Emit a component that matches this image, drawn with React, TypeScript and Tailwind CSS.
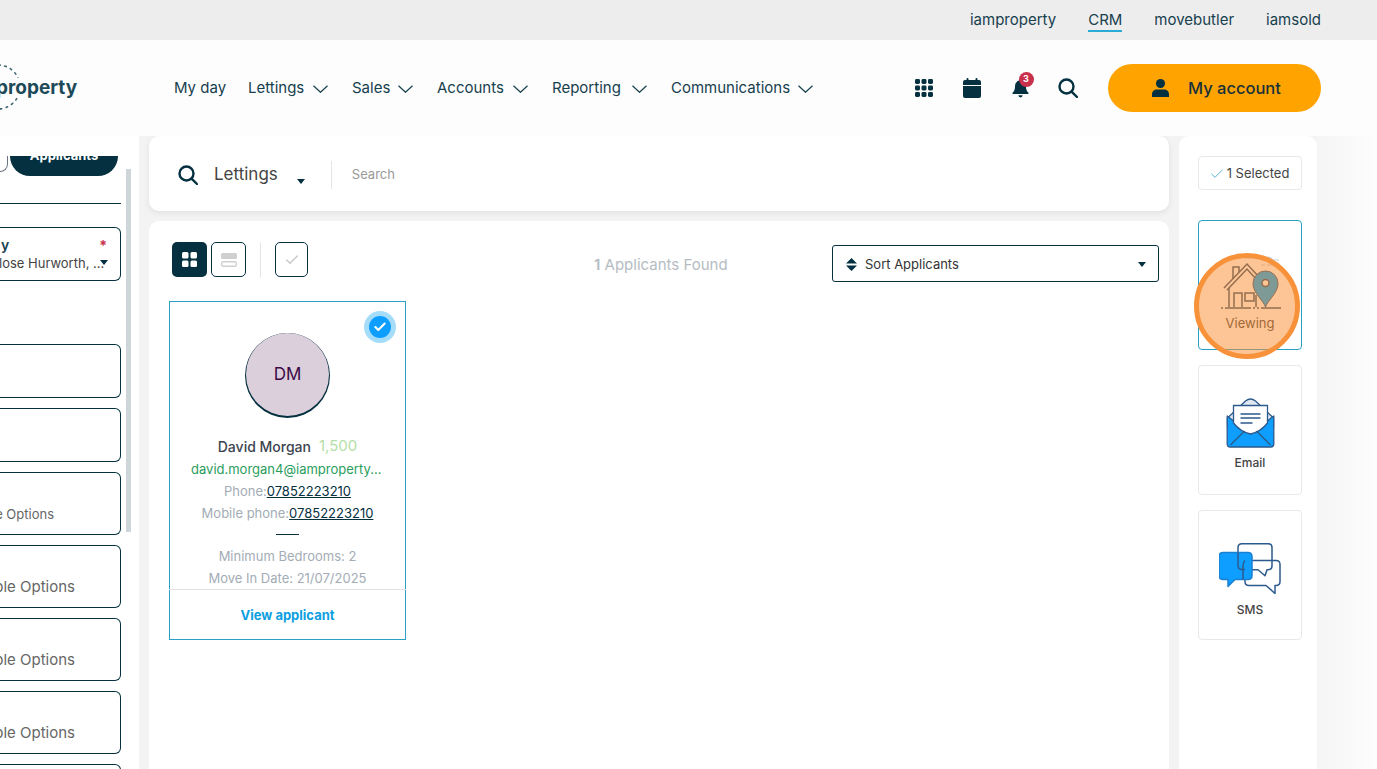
import { Check } from "lucide-react";

const font = { fontFamily: "Inter, 'Noto Sans', sans-serif" };

const navItems = [
  { label: "My day", hasMenu: false, width: "w-[50px]" },
  { label: "Lettings", hasMenu: true, width: "w-[56px]" },
  { label: "Sales", hasMenu: true, width: "w-[37px]" },
  { label: "Accounts", hasMenu: true, width: "w-[67px]" },
  { label: "Reporting", hasMenu: true, width: "w-[71px]" },
  { label: "Communications", hasMenu: true, width: "w-[118px]" },
];

const filterBoxes = [
  { height: "h-[54px]", text: "", textClass: "" },
  { height: "h-[54px]", text: "", textClass: "" },
  { height: "h-[63px]", text: "e Options", textClass: "text-[13px] pt-[32px] pr-[66px]" },
  { height: "h-[63px]", text: "ple Options", textClass: "text-[15px] pt-[30px] pr-[45px]" },
  { height: "h-[63px]", text: "ple Options", textClass: "text-[15px] pt-[30px] pr-[45px]" },
  { height: "h-[63px]", text: "ple Options", textClass: "text-[15px] pt-[30px] pr-[45px]" },
];

function Caret({ className }: { className: string }) {
  return (
    <svg className={className} viewBox="0 0 8 5" fill="currentColor">
      <path d="M0 0h8L4 5z" />
    </svg>
  );
}

function NavChevron() {
  return (
    <svg className="w-[15px] h-2 mt-[2px]" viewBox="0 0 15 8" fill="none" stroke="#17404e" strokeWidth="1.200">
      <path d="M.5.7 7.500 7.300 14.500.7" />
    </svg>
  );
}

function SearchGlyph({ className }: { className: string }) {
  return (
    <svg className={className} viewBox="0 0 20 20" fill="none" stroke="#04303f" strokeWidth="2.400" strokeLinecap="round">
      <circle cx="8.500" cy="8.500" r="7" />
      <path d="M13.800 13.800 19 19" />
    </svg>
  );
}

function GridIcon() {
  return (
    <svg className="w-[18px] h-[18px]" viewBox="0 0 18 18" fill="#04303f">
      {[0, 6.5, 13].map((y) =>
        [0, 6.5, 13].map((x) => <rect key={`${x}-${y}`} x={x} y={y} width="5" height="5" rx="1.4" />),
      )}
    </svg>
  );
}

function CalendarIcon() {
  return (
    <svg className="w-[18px] h-5" viewBox="0 0 18 20" fill="#04303f">
      <rect x="3.500" y="0" width="2" height="4" rx="1" />
      <rect x="12.500" y="0" width="2" height="4" rx="1" />
      <path d="M2 2h14a2 2 0 0 1 2 2v3H0V4a2 2 0 0 1 2-2z" />
      <path d="M0 8h18v10a2 2 0 0 1-2 2H2a2 2 0 0 1-2-2z" />
    </svg>
  );
}

function BellIcon() {
  return (
    <svg className="w-[17px] h-[19px]" viewBox="0 0 20 22" fill="#04303f">
      <path d="M10 0a1.500 1.500 0 0 1 1.500 1.600C14.600 2.300 16.400 5 16.400 8c0 4.600 1.200 6.200 3 8v1.500H.6V16c1.800-1.800 3-3.400 3-8 0-3 1.800-5.700 4.900-6.400A1.500 1.500 0 0 1 10 0z" />
      <path d="M7.500 19h5a2.500 2.500 0 0 1-5 0z" />
    </svg>
  );
}

function PersonIcon() {
  return (
    <svg className="w-[17px] h-[18px]" viewBox="0 0 18 19" fill="#04303f">
      <circle cx="9" cy="4.800" r="4.800" />
      <path d="M0 19v-3c0-3 2.500-5 5-5h8c2.500 0 5 2 5 5v3z" />
    </svg>
  );
}

function ViewingIcon() {
  return (
    <svg className="w-[60px] h-[56px]" viewBox="0 0 60 56" fill="none" stroke="#2d4f6f" strokeWidth="1.500">
      <path d="M46 2c3 0 5 1 6 3h6M40 10h4M46 10h6M24 3h6M32 3h4" strokeOpacity="0.3" strokeWidth="1" />
      <path d="M3 33 26 9l12 13" />
      <path d="M6 35 26 14l9 10" />
      <path d="M12 24V12h6v5" />
      <path d="M8 33v19M35 40v12" />
      <path d="M13 52V38h8v14M24 38h9v8h-9z" />
      <path d="M0 53h60" strokeDasharray="2 2 26 2 2 2 2 2 30" />
      <path d="M44.500 52C42 45 32 38 32 28.500a12.500 12.500 0 0 1 25 0c0 9.500-10 16.500-12.500 23.500z" fill="#00a8ff" stroke="#2d4f6f" strokeWidth="1" />
      <circle cx="44.500" cy="28" r="3.500" fill="#fff" stroke="#2d4f6f" />
    </svg>
  );
}

function EmailIcon() {
  return (
    <svg className="w-[49px] h-[50px]" viewBox="0 0 48 50" stroke="#2c5a8c" strokeWidth="1.300" strokeLinejoin="round">
      <path d="M1 20 19 3q5-4 10 0l18 17v10H1z" fill="#dfe8f2" />
      <path d="M0.700 18 24 36l23.300-18v28q0 3-3 3H3.700q-3 0-3-3z" fill="#0d9eff" />
      <path d="M7 7.500h34V25q-7 9-17 11Q14 34 7 25z" fill="#fff" />
      <path d="M14 16h20M14 20h20M14 25h12" fill="none" strokeWidth="1.600" />
      <path d="M4 47l14-14M44 47 30 33" fill="none" />
    </svg>
  );
}

function SmsIcon() {
  return (
    <svg className="w-[62px] h-[52px]" viewBox="0 0 62 52" fill="none" stroke="#2c5a8c" strokeWidth="1.500" strokeLinejoin="round">
      <path d="M23 .7h26q4 0 4 4v18q0 4-4 4h-1l-2 6-7-6H23q-4 0-4-4v-18q0-4 4-4z" />
      <path d="M30 17.500h27q4 0 4 4v17q0 4-4 4h-1v8l-9-8H30q-4 0-4-4v-17q0-4 4-4z" />
      <path d="M4 9.500h25q4 0 4 4v19q0 4-4 4H16l-7 7v-7H4q-4 0-4-4v-19q0-4 4-4z" fill="#0d9eff" stroke="#1c7fd0" />
      <path d="M19 9.500v13q0 3 3 4h4M26 17.500q-2 2-2 5v14" />
    </svg>
  );
}

export default function App() {
  return (
    <div className="h-[769px] w-[1377px] overflow-hidden bg-[#f3f3f3] text-[#04303f]" style={font}>
      <div className="h-10 bg-[#ededed] flex justify-end items-center gap-8 pr-14 text-[15px] text-[#17404e]">
        <span>iamproperty</span>
        <span className="h-full flex items-center relative">
          CRM
          <span className="absolute left-0 right-0 bottom-2 h-0.5 bg-[#29abd4]" />
        </span>
        <span>movebutler</span>
        <span>iamsold</span>
      </div>

      <header className="h-24 bg-[#fdfdfd] flex items-center relative">
        <div className="w-[174px] shrink-0 h-full flex items-center overflow-hidden relative">
          <svg className="absolute -left-[26px] top-[23px] w-[48px] h-[48px]" viewBox="0 0 48 48" fill="none" stroke="#3f6470" strokeWidth="1.600" strokeDasharray="1.600 4.500" strokeLinecap="round">
            <circle cx="24" cy="24" r="22" />
          </svg>
          <span className="relative -ml-1 -mt-[1px] text-[19px] font-bold text-[#1d4a58] bg-[#fdfdfd] leading-[20px]">property</span>
        </div>
        <nav className="flex items-center gap-6 text-[15px] text-[#17404e]">
          {navItems.map((item) => (
            <span key={item.label} className="flex items-center gap-[9px]">
              <span className={`${item.width} whitespace-nowrap`}>{item.label}</span>
              {item.hasMenu && <NavChevron />}
            </span>
          ))}
        </nav>
        <div className="ml-auto mr-14 flex items-center">
          <div className="flex items-center gap-6 mr-[28px]">
            <span className="w-6 flex justify-center"><GridIcon /></span>
            <span className="w-6 flex justify-center"><CalendarIcon /></span>
            <div className="w-6 flex justify-center">
              <div className="relative flex">
                <BellIcon />
                <span className="absolute -top-[7px] left-[7px] w-[15px] h-[15px] rounded-full bg-[#c8304b] text-white text-[9px] font-bold flex items-center justify-center">3</span>
              </div>
            </div>
            <span className="w-6 flex justify-center"><SearchGlyph className="w-5 h-5" /></span>
          </div>
          <button className="w-[213px] h-12 rounded-full bg-[#ffa300] flex items-center pl-[44px] gap-[19px] text-[16.500px] font-medium text-[#17313a]">
            <PersonIcon />
            My account
          </button>
        </div>
      </header>

      <div className="flex gap-[10px] h-[633px]">
        <aside className="w-[139px] shrink-0 bg-white overflow-hidden relative pt-5">
          <div className="absolute left-[126px] top-[33px] w-[5px] h-[363px] bg-[#cfd6da]" />
          <div className="flex gap-[2px]">
            <div className="w-2 h-4 rounded-br-[14px] border-r border-b border-[#6b7280]" />
            <div className="w-[108px] h-5 rounded-b-[20px] bg-[#04303f] text-white text-[13px] font-bold text-center leading-[16px]">
              <div className="-mt-[9px]">Applicants</div>
            </div>
          </div>
          <div className="w-[121px] border-b border-[#04303f] mt-[27px]" />
          <div className="w-[121px] h-[54px] mt-[23px] border border-[#04303f] border-l-0 rounded-r-md flex flex-col justify-center relative">
            <div className="text-[14px] leading-[15px] font-semibold text-[#17404e] ml-[1px]">y</div>
            <div className="mt-[3px] text-[13px] leading-[17px] text-[#444] whitespace-nowrap -ml-[1px] overflow-hidden">lose Hurworth, ...</div>
            <span className="absolute right-[13px] top-[7px] text-[#c8304b] text-[14px] font-bold">*</span>
            <Caret className="absolute right-[12px] top-[32px] w-2 h-[5px] text-[#04303f]" />
          </div>
          <div className="flex flex-col gap-[10px] mt-[63px]">
            {filterBoxes.map((box, i) => (
              <div key={i} className={`w-[121px] ${box.height} border border-[#04303f] border-l-0 rounded-r-md text-[#666] whitespace-nowrap overflow-hidden`}>
                <div className={`flex justify-end ${box.textClass}`}>{box.text}</div>
              </div>
            ))}
            <div className="w-[121px] h-[63px] border border-[#04303f] border-l-0 rounded-r-md" />
          </div>
        </aside>

        <main className="w-[1020px] shrink-0 flex flex-col gap-[10px]">
          <section className="h-[75px] bg-white rounded-[10px] shadow-[0_2px_6px_rgba(0,0,0,0.08)] flex items-center pl-[29px] pt-[2px]">
            <SearchGlyph className="w-5 h-5" />
            <span className="ml-4 text-[17px] text-[#444]">Lettings</span>
            <Caret className="ml-[19px] mt-[14px] w-2 h-[5px] text-[#04303f]" />
            <span className="ml-[26px] w-px h-[28px] bg-[#e5e5e5]" />
            <span className="ml-5 text-[13px] text-[#999]">Search</span>
          </section>

          <section className="flex-1 bg-white rounded-t-[10px] pt-[21px] pl-5 pr-[10px] relative">
            <div className="flex items-start h-[38px] pl-[3px]">
              <button className="w-[35px] h-[35px] rounded-[5px] bg-[#04303f] flex items-center justify-center">
                <svg className="w-[15px] h-[15px]" viewBox="0 0 15 15" fill="#fff">
                  <rect width="6.500" height="6.500" rx="1.500" />
                  <rect x="8.500" width="6.500" height="6.500" rx="1.500" />
                  <rect y="8.500" width="6.500" height="6.500" rx="1.500" />
                  <rect x="8.500" y="8.500" width="6.500" height="6.500" rx="1.500" />
                </svg>
              </button>
              <button className="ml-1 w-[35px] h-[35px] rounded-[5px] border border-[#04303f] flex items-center justify-center">
                <svg className="w-4 h-[14px]" viewBox="0 0 16 14">
                  <rect width="16" height="6" rx="1.500" fill="#cfcfcf" />
                  <rect x=".7" y="8.700" width="14.600" height="4.600" rx="1.500" fill="none" stroke="#cfcfcf" strokeWidth="1.400" />
                </svg>
              </button>
              <span className="ml-[14px] w-px h-[36px] bg-[#e5e5e5]" />
              <button className="ml-[14px] w-[33px] h-[35px] rounded-[5px] border border-[#04303f] flex items-center justify-center">
                <Check className="w-4 h-4 text-[#c9c9c9]" strokeWidth={2.200} />
              </button>
              <span className="ml-[286px] mt-[14px] text-[15px] leading-[18px] text-[#b5bcc2]">
                <b className="font-semibold">1</b> Applicants Found
              </span>
              <button className="mt-[3px] w-[327px] h-[37px] ml-auto rounded-[3px] border border-[#04303f] flex items-center pl-[13px] pr-[12px] pt-[2px] text-[13px] text-[#333]">
                <svg className="w-[11px] h-[13px] mr-[8px]" viewBox="0 0 11 13" fill="#04303f">
                  <path d="M5.500 0 11 5.500H0zM5.500 13 0 7.500h11z" />
                </svg>
                Sort Applicants
                <Caret className="ml-auto w-2 h-[5px] text-[#04303f]" />
              </button>
            </div>

            <div className="mt-[21px] w-[237px] h-[339px] shadow-[inset_0_0_0_1px_#2ba0c5] relative flex flex-col items-center">
              <span className="absolute right-[10px] top-[10px] w-[32px] h-[32px] rounded-full bg-[#a5dcfa] flex items-center justify-center">
                <span className="w-[22px] h-[22px] rounded-full bg-[#0d9eff] flex items-center justify-center">
                  <Check className="w-[14px] h-[14px] text-white" strokeWidth={3.500} />
                </span>
              </span>
              <div className="mt-[32px] w-[83px] h-[83px] rounded-full bg-[#dccfdc] shadow-[0_1px_0_1px_#04303f] flex items-center justify-center text-[17px] text-[#3b0a45]">
                DM
              </div>
              <div className="mt-[19px] h-[22px] flex items-center gap-2 text-[14px] font-medium text-[#3d4450]">
                David Morgan <span className="text-[15px] font-normal text-[#b5e0a8]">1,500</span>
              </div>
              <div className="w-[193px] h-[23px] pt-[1px] leading-[23px] truncate text-center text-[13px] text-[#2a9d5c]">david.morgan4@iamproperty.co.uk</div>
              <div className="h-[22px] leading-[22px] text-[13px] text-[#a3acb5]">
                Phone:<span className="underline text-[#04303f]">07852223210</span>
              </div>
              <div className="h-[22px] leading-[22px] text-[13px] text-[#a3acb5]">
                Mobile phone:<span className="underline text-[#04303f]">07852223210</span>
              </div>
              <div className="mt-[10px] w-[23px] border-b border-[#04303f]" />
              <div className="mt-[10px] h-[22px] leading-[22px] text-[13px] text-[#a3acb5]">Minimum Bedrooms: 2</div>
              <div className="h-[22px] leading-[22px] text-[13px] text-[#a3acb5]">Move In Date: 21/07/2025</div>
              <div className="w-full border-t border-[#e2e2e2]" />
              <div className="flex-1 flex items-center pt-[1px] text-[13px] font-bold text-[#0d9fe0]">View applicant</div>
            </div>
          </section>
        </main>

        <aside className="w-[138px] shrink-0 bg-white rounded-t-[10px] pt-5 pl-[19px]">
          <div className="w-[104px] h-[34px] rounded-[4px] border border-[#e8e8e8] flex items-center justify-center gap-[2px] pt-[1px] pr-[2px] text-[13px] text-[#444]">
            <Check className="w-4 h-4 text-[#2ba0c5]" strokeWidth={1.200} />
            1 Selected
          </div>
          <div className="mt-[30px] flex flex-col gap-[15px]">
            <div className="relative w-[104px] h-[130px] rounded-[4px] border border-[#2ba0c5] flex flex-col items-center pt-[34px]">
              <div className="ml-[1px]">
                <ViewingIcon />
              </div>
              <span className="mt-[3px] text-[13px] text-[#444]">Viewing</span>
              <span className="absolute -left-[5px] top-[32px] w-[106px] h-[106px] rounded-full border-[5px] border-[#f7923a] bg-[#fb8c2e]/50" />
            </div>
            <div className="w-[104px] h-[130px] rounded-[4px] border border-[#e8e8e8] flex flex-col items-center pt-[32px]">
              <EmailIcon />
              <span className="mt-[6px] text-[12px] font-medium text-[#444]">Email</span>
            </div>
            <div className="w-[104px] h-[130px] rounded-[4px] border border-[#e8e8e8] flex flex-col items-center pt-[32px]">
              <SmsIcon />
              <span className="mt-[6px] text-[12px] font-medium text-[#444]">SMS</span>
            </div>
          </div>
        </aside>

        <div className="flex-1 bg-gradient-to-r from-[#f5f5f5] to-[#fdfdfd] -ml-[10px]" />
      </div>
    </div>
  );
}
